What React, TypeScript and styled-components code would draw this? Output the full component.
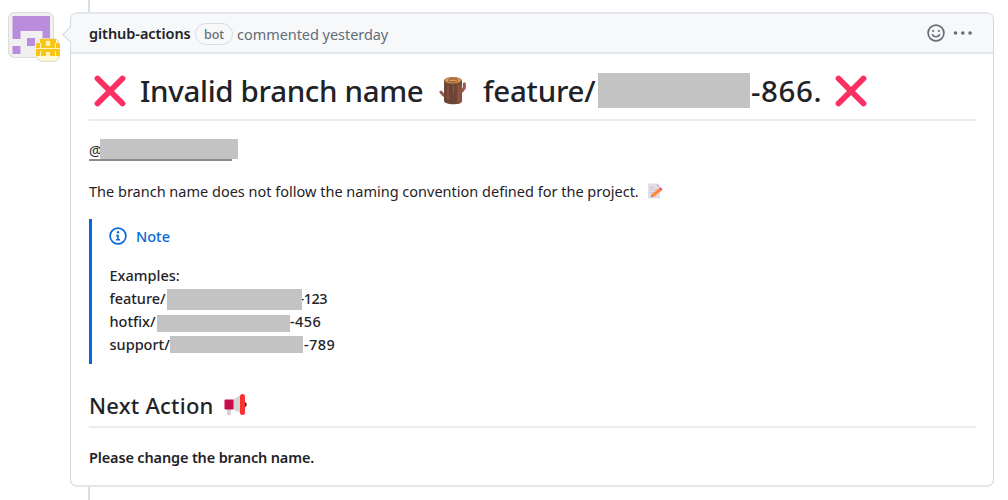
import React from 'react';
import styled, { createGlobalStyle } from 'styled-components';

const GlobalStyle = createGlobalStyle`
  * {
    box-sizing: border-box;
  }

  body {
    margin: 0;
    background: #ffffff;
    color: #1f2328;
    font-family: 'Noto Sans', 'Open Sans', sans-serif;
    font-size: 14.5px;
    overflow: hidden;
  }
`;

const examples = [
  { prefix: 'feature/', start: 57.5, top: 2, width: 135, height: 21, suffix: '-123', end: 190, spacing: -0.5 },
  { prefix: 'hotfix/', start: 47.5, top: 5, width: 133, height: 17, suffix: '-456', end: 180.5, spacing: 0.4 },
  { prefix: 'support/', start: 60.5, top: 3, width: 133, height: 17, suffix: '-789', end: 194.5, spacing: 0.4 },
];

const CrossMark = () => (
  <svg width="32" height="32" viewBox="0 0 32 32">
    <path d="M3.5 3.5 28.5 28.5M28.5 3.5 3.5 28.5" stroke="#fb2f62" strokeWidth="5.8" strokeLinecap="round" />
  </svg>
);

const WoodLog = () => (
  <svg width="28" height="30" viewBox="0 0 28 30">
    <path d="M23 15 25.3 12V7.8M7 20 4.5 19 2 16.2" fill="none" stroke="#985b4d" strokeWidth="3" strokeLinecap="round" />
    <path d="M5 4.5h18v20c0 5-18 5-18 0Z" fill="#6d4534" />
    <path d="M18 9h5v15.5c0 2-2 3.3-5 3.7Z" fill="#8b5142" />
    <path d="M9 10v13M14.5 10v7" stroke="#90594a" strokeWidth="1.2" strokeLinecap="round" />
    <ellipse cx="14" cy="4.7" rx="9" ry="3.8" fill="#8a5b42" />
    <ellipse cx="14" cy="4.3" rx="8" ry="2.9" fill="#df9a50" />
    <ellipse cx="14" cy="4.4" rx="5" ry="1.6" fill="none" stroke="#815139" strokeWidth="1" />
  </svg>
);

const Memo = () => (
  <svg width="16" height="16" viewBox="0 0 16 16">
    <path d="M1 .5h9l3 3v12H1Z" fill="#e2dce9" />
    <path d="M10 .5v3h3" fill="#bcb2ca" />
    <path d="M3 4.5h5M3 7h7M3 9.5h4M3 12h2" stroke="#cbc3d5" />
    <path d="m5 11.2 7-6 2.2 2.5-6.8 5.7L4 14Z" fill="#ff8838" />
    <path d="m12 5.2 1.2-1 2.3 2.4-1.3 1.1Z" fill="#ee365d" />
    <path d="m4 14 .4-1.3L5.6 14Z" fill="#594955" />
  </svg>
);

const Megaphone = () => (
  <svg width="24" height="22" viewBox="0 0 24 22">
    <path d="M3 15h4v5.5q-2 1.5-4 0Z" fill="#d4d2d3" />
    <path d="m8 6 9-5v18l-9-4Z" fill="#d3d3d3" />
    <rect x=".5" y="5.5" width="9" height="10" rx="1" fill="#ca0b4a" />
    <path d="M19 7.5c5 0 5 6 0 6Z" fill="#321b2b" />
    <rect x="16" y="0" width="5" height="21" rx="2.5" fill="#fa3131" />
  </svg>
);

const Smiley = () => (
  <svg width="18" height="18" viewBox="0 0 18 18" fill="none" stroke="#656d76" strokeWidth="1.7">
    <circle cx="9" cy="9" r="7.9" />
    <path d="M5.5 10.8c1.6 2.6 5.4 2.6 7 0" strokeLinecap="round" />
    <circle cx="6.2" cy="7" r="1.1" fill="#656d76" stroke="none" />
    <circle cx="11.8" cy="7" r="1.1" fill="#656d76" stroke="none" />
  </svg>
);

const Kebab = () => (
  <svg width="20" height="6" viewBox="0 0 20 6" fill="#656d76">
    <circle cx="2.5" cy="3" r="1.8" />
    <circle cx="9.8" cy="3" r="1.8" />
    <circle cx="17.1" cy="3" r="1.8" />
  </svg>
);

const InfoIcon = () => (
  <svg width="18" height="18" viewBox="0 0 18 18" fill="none" stroke="#0969da" strokeWidth="1.7">
    <circle cx="9" cy="9" r="7.9" />
    <circle cx="9" cy="5.3" r="1.2" fill="#0969da" stroke="none" />
    <path d="M7.2 8.6H9v4M7 12.7h4" strokeWidth="1.6" />
  </svg>
);

const App = () => (
  <>
    <GlobalStyle />
    <Timeline>
      <Avatar>
        <svg width="38" height="38" viewBox="0 0 38 38" fill="#b98ddc">
          <path d="M.5 0h38v23h-8v-8h-22v8h-8ZM15 22h8v8h-8ZM.5 30h8v8h-8Z" />
        </svg>
        <AppAvatar>
          <svg width="24" height="24" viewBox="0 0 24 24">
            <path d="M4 1h16v4h4v13H0V5h4Z" fill="#f9c517" />
            <path d="M4 5h1v5H4ZM10 3h4v5h-4ZM19 5h1v5h-1ZM0 10h24v1H0ZM4 13h1v5H4ZM10 14h4v4h-4ZM19 13h1v5h-1Z" fill="#fff4bb" />
          </svg>
        </AppAvatar>
      </Avatar>
      <Comment>
        <CommentHeader>
          <Author>github-actions</Author>
          <BotLabel>bot</BotLabel>
          <Timestamp>commented yesterday</Timestamp>
          <Actions>
            <Smiley />
            <Kebab />
          </Actions>
        </CommentHeader>
        <CommentBody>
          <Title>
            <Piece $width={51} $pad={5}><CrossMark /></Piece>
            <Piece $width={299} $spacing={-0.33}>Invalid branch name</Piece>
            <Piece $width={44}><WoodLog /></Piece>
            <Piece $width={115} $spacing={-0.25}>feature/</Piece>
            <Redacted $width={152} $height={35} $top={0} />
            <Piece $width={85} $pad={1} $spacing={0.6}>-866.</Piece>
            <CrossMark />
          </Title>
          <Mention>
            <At>@</At>
            <Redacted $width={138} $height={20} />
          </Mention>
          <Paragraph>
            <Piece $width={557.5}>
              The branch name does not follow the naming convention defined for the project.
            </Piece>
            <Memo />
          </Paragraph>
          <Note>
            <NoteTitle><InfoIcon />Note</NoteTitle>
            <ExampleLine>Examples:</ExampleLine>
            {examples.map((item) => (
              <ExampleLine key={item.prefix}>
                <Piece $width={item.start}>{item.prefix}</Piece>
                <ExampleMask $width={item.end - item.start}>
                  <Redacted $width={item.width} $height={item.height} $top={item.top} />
                </ExampleMask>
                <Suffix $spacing={item.spacing}>{item.suffix}</Suffix>
              </ExampleLine>
            ))}
          </Note>
          <Subtitle>
            <Piece $width={135} $spacing={0.22}>Next Action</Piece>
            <Megaphone />
          </Subtitle>
          <Closing>Please change the branch name.</Closing>
        </CommentBody>
      </Comment>
    </Timeline>
  </>
);

interface PieceProps {
  $width: number;
  $pad?: number;
  $spacing?: number;
}

interface RedactedProps {
  $width: number;
  $height: number;
  $top?: number;
}

const Timeline = styled.div`
  display: flex;
  align-items: flex-start;
  height: 500px;
  width: 1008px;
  padding: 12px 0 0 8px;
  background: linear-gradient(#d8dee4, #d8dee4) 88px 0 / 2px 100% no-repeat;
`;

const Avatar = styled.div`
  position: relative;
  width: 46px;
  height: 46px;
  margin-right: 16px;
  padding: 4px;
  background: #f0f0f0;
  border-radius: 7px;
  box-shadow: inset 0 0 0 1px #dcdcdc;

  svg {
    display: block;
  }
`;

const AppAvatar = styled.div`
  position: absolute;
  left: 28px;
  top: 26px;
  width: 24px;
  height: 24px;
  background: #fff9d5;
  border-radius: 7px;
  box-shadow: inset 0 0 0 1px #dddcd5;
  overflow: hidden;
`;

const Comment = styled.div`
  position: relative;
  width: 924px;
  height: 475px;
  background: #ffffff;
  border: 1px solid #d0d7de;
  border-top: 2px solid #e3e7ec;
  border-bottom: 2px solid #e3e7ec;
  border-radius: 7px;

  &::before {
    content: '';
    position: absolute;
    left: -6px;
    top: 14px;
    width: 12px;
    height: 12px;
    background: #f6f8fa;
    border-left: 1px solid #d0d7de;
    border-bottom: 1px solid #d0d7de;
    transform: rotate(45deg);
  }
`;

const CommentHeader = styled.div`
  position: relative;
  display: flex;
  align-items: center;
  height: 40px;
  padding: 0 20px 0 18px;
  background: #f6f8fa;
  border-bottom: 2px solid #e3e7ec;
  border-radius: 6px 6px 0 0;
  color: #656d76;
`;

const Author = styled.strong`
  width: 106px;
  color: #1f2328;
  font-weight: 600;
  letter-spacing: -0.05px;
  white-space: nowrap;
`;

const BotLabel = styled.span`
  width: 38px;
  height: 22px;
  margin: 1px 4px 0 0;
  border: 1px solid #d8dee4;
  border-radius: 11px;
  font-size: 12.5px;
  font-weight: 500;
  line-height: 21px;
  text-align: center;
`;

const Timestamp = styled.span`
  padding-top: 1px;
  letter-spacing: -0.05px;
  white-space: nowrap;
`;

const Actions = styled.div`
  display: flex;
  align-items: center;
  gap: 8px;
  margin-left: auto;
`;

const CommentBody = styled.div`
  padding: 0 17px 0 18px;
`;

const Title = styled.h1`
  display: flex;
  align-items: center;
  height: 67px;
  margin: 0;
  padding-top: 8px;
  border-bottom: 2px solid #e9ecf0;
  font-size: 29.5px;
  font-weight: 500;
  line-height: 40px;
`;

const Piece = styled.span<PieceProps>`
  flex: none;
  display: flex;
  align-items: center;
  width: ${(props) => props.$width}px;
  padding-left: ${(props) => props.$pad || 0}px;
  letter-spacing: ${(props) => props.$spacing || 0}px;
  white-space: nowrap;
`;

const Redacted = styled.span<RedactedProps>`
  position: relative;
  z-index: 1;
  flex: none;
  display: block;
  width: ${(props) => props.$width}px;
  height: ${(props) => props.$height}px;
  margin-top: ${(props) => props.$top || 0}px;
  background: #c3c3c3;
`;

const Mention = styled.div`
  display: flex;
  width: 143px;
  height: 22px;
  margin-top: 18px;
  border-bottom: 2px solid #8b8c8c;
  line-height: 22px;
`;

const At = styled.span`
  width: 11px;
  flex: none;
`;

const Paragraph = styled.div`
  display: flex;
  align-items: center;
  height: 22px;
  margin-top: 19px;
`;

const Note = styled.div`
  height: 145px;
  margin-top: 17px;
  padding: 5px 0 0 17.5px;
  border-left: 3px solid #0969da;
  font-weight: 500;
`;

const NoteTitle = styled.div`
  display: flex;
  align-items: center;
  gap: 9.5px;
  height: 24px;
  margin: 0 0 16px -1px;
  color: #0969da;
`;

const ExampleLine = styled.div`
  display: flex;
  height: 23px;
  line-height: 23px;
`;

const ExampleMask = styled.span<{ $width: number }>`
  flex: none;
  width: ${(props) => props.$width}px;
`;

const Suffix = styled.span<{ $spacing: number }>`
  letter-spacing: ${(props) => props.$spacing}px;
`;

const Subtitle = styled.h2`
  display: flex;
  align-items: center;
  height: 50px;
  margin: 14px 0 0;
  padding-top: 6px;
  border-bottom: 2px solid #e9ecf0;
  font-size: 22px;
  font-weight: 500;
`;

const Closing = styled.p`
  margin: 18px 0 0;
  font-weight: 600;
  letter-spacing: -0.15px;
  line-height: 22px;
`;

export default App;
